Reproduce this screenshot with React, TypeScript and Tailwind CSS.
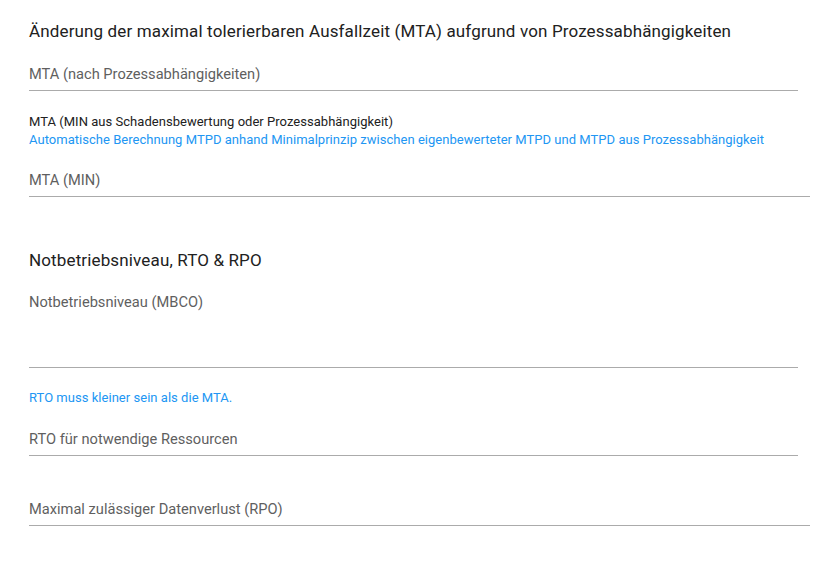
const font = { fontFamily: 'Roboto, "Noto Sans", sans-serif' }

function Field({ label, wide, tall }: { label: string; wide?: boolean; tall?: boolean }) {
  return (
    <div className={wide ? 'w-[781px]' : 'w-[769px]'}>
      <div className={`flex border-b border-[#ababab] ${tall ? 'h-[80px] items-start pt-[4px]' : 'h-[32px] items-center'}`}>
        <span className="text-[14.65px] text-[#5f5f5f]">{label}</span>
      </div>
    </div>
  )
}

export default function App() {
  return (
    <div className="min-h-[564px] w-[834px] bg-white pl-[29px] pt-[20px]" style={font}>
      <h2 className="text-[17px] leading-[22px] tracking-[0.14px] text-[#212121]">
        Änderung der maximal tolerierbaren Ausfallzeit (MTA) aufgrund von Prozessabhängigkeiten
      </h2>

      <div className="mt-[17px]">
        <Field label="MTA (nach Prozessabhängigkeiten)" />
      </div>

      <div className="mt-[22px] text-[13px] leading-[18px] tracking-[0.03px]">
        <p className="text-[#212121]">MTA (MIN aus Schadensbewertung oder Prozessabhängigkeit)</p>
        <p className="text-[#2196f3]">
          Automatische Berechnung MTPD anhand Minimalprinzip zwischen eigenbewerteter MTPD und MTPD aus Prozessabhängigkeit
        </p>
      </div>

      <div className="mt-[16px]">
        <Field label="MTA (MIN)" wide />
      </div>

      <h2 className="mt-[52px] text-[17px] leading-[22px] tracking-[0.14px] text-[#212121]">Notbetriebsniveau, RTO &amp; RPO</h2>

      <div className="mt-[17px]">
        <Field label="Notbetriebsniveau (MBCO)" tall />
      </div>

      <p className="mt-[22px] text-[13px] leading-[16px] tracking-[0.03px] text-[#2196f3]">RTO muss kleiner sein als die MTA.</p>

      <div className="mt-[18px]">
        <Field label="RTO für notwendige Ressourcen" />
      </div>

      <div className="mt-[38px]">
        <Field label="Maximal zulässiger Datenverlust (RPO)" wide />
      </div>
    </div>
  )
}
